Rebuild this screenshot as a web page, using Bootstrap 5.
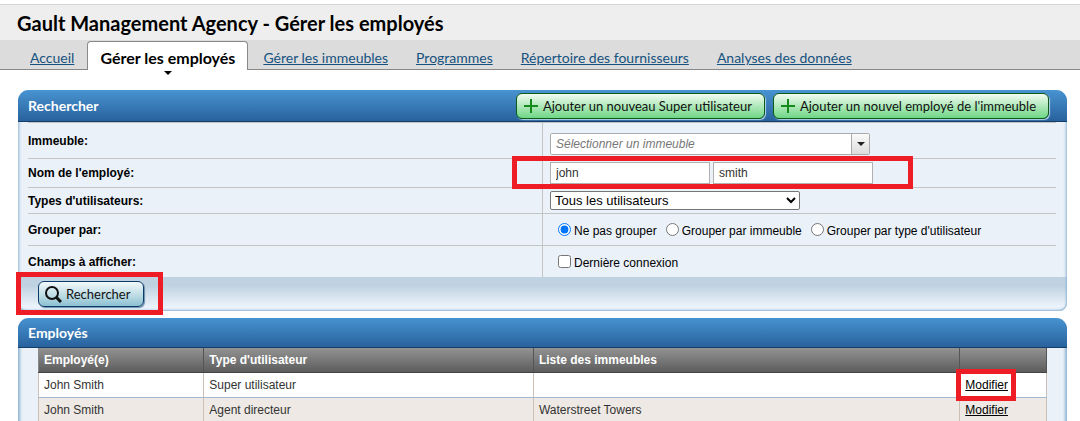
<!DOCTYPE html>
<html lang="fr">
<head>
<meta charset="utf-8">
<meta name="viewport" content="width=device-width, initial-scale=1">
<title>Gault Management Agency - Gérer les employés</title>
<link href="https://cdn.jsdelivr.net/npm/bootstrap@5.3.0/dist/css/bootstrap.min.css" rel="stylesheet">
<style>
body { font: 12px/16px "Liberation Sans", Arial, sans-serif; color: #000; background: #fff; }
.top-bar { margin-top: 4px; height: 36px; border-top: 1px solid #d5d5d5; background: #eee; padding-left: 17px; }
.top-bar h1 { font: 700 20px/36px Lato, sans-serif; color: #000; }
.tab-bar { height: 30px; background: #dcdcdc; border-bottom: 1px solid #888; padding-left: 15px; font: 14px/20px Lato, sans-serif; }
.tab-bar .nav-link { padding: 8px 15px 1px 15px; margin-right: -2px; color: #16527f; text-decoration: underline; line-height: 20px; }
.tab-bar .nav-link.active { position: relative; margin: 1px 0 0; height: 29px; padding: 6px 12px 2px; background: #fff; border: 1px solid #888; border-bottom: 0; border-radius: 4px 4px 0 0; color: #000; font-size: 16px; font-weight: 700; text-decoration: none; }
.tab-bar .nav-link.active::after { content: ""; position: absolute; left: 50%; top: 29px; margin-left: -4px; border: 4px solid transparent; border-top: 4px solid #000; border-bottom: 0; }
.panels { padding: 20px 13px 0 18px; gap: 7px; }
.panel { border-radius: 11px 11px 8px 8px; background: #eaf1f9; box-shadow: inset 0 0 3px 1px #8db4d2; }
.panel-open { border-radius: 11px 11px 0 0; box-shadow: inset 4px 0 3px -2px #8db4d2, inset -4px 0 3px -2px #8db4d2; }
.panel-head { min-height: 30px; padding: 0 18px 0 10px; border-bottom: 1px solid #153e6b; border-radius: 11px 11px 0 0; background: linear-gradient(#4893d1, #28629d); }
.panel-head h2 { font: 700 14px/29px Lato, sans-serif; color: #fff; }
.search-head { min-height: 32px; }
.push { font: 13px/20px Lato, sans-serif; height: 26px; border-radius: 6px; color: #111; padding: 2px 13px 2px 6px; gap: 4px; display: inline-flex; align-items: center; white-space: nowrap; }
.push-add { padding-right: 12px; border: 1px solid #0c5c18; background: linear-gradient(#f2fbf2, #a9e6b4 55%, #6fd787); box-shadow: 1px 1px 1px #b5d3ea; }
.push-find { border: 1px solid #0d3c6b; background: linear-gradient(#f2f9fb, #b9d9e3 60%, #8cc1d1); box-shadow: 1px 1px 1px #6b8dab; }
.fields { margin: 0 11px 0 10px; border-top: 1px solid #c4c4c4; }
.field-row + .field-row { border-top: 1px solid #c4c4c4; }
.field-name { font-weight: 700; }
.field-value { border-left: 1px solid #c4c4c4; padding-left: 7px; }
.field-choices { padding: 3px 0 0 15px; gap: 9px; }
.h-a { height: 35px; } .h-b { height: 28px; } .h-c { height: 25px; } .h-d { height: 31px; }
.combo { width: 320px; height: 22px; margin-bottom: 3px; border: 1px solid #aaa; border-radius: 2px; background: #fff; overflow: hidden; }
.combo input { border: 0; padding: 0 5px; font: italic 12px/20px "Liberation Sans", sans-serif; outline: 0; }
.combo input::placeholder { color: #777; opacity: 1; }
.combo button { width: 18px; padding: 0; border: 0; border-left: 1px solid #aaa; background: linear-gradient(#fafafa, #ddd); }
.name-pair { gap: 3px; }
.name-box { width: 160px; height: 22px; border: 1px solid #b0b0b0; padding: 1px 5px; font-size: 12px; color: #333; background: #fff; }
.type-list { width: 250px; height: 19px; border: 1px solid #767676; border-radius: 2px; font: 13px/16px "Liberation Sans", sans-serif; background: #fff; color: #000; }
.choice { gap: 3px; }
.choice input { margin: 0; width: 13px; height: 13px; }
.mark-box { position: relative; }
.mark-box::after { content: ""; position: absolute; border: 5px solid #ee1c25; pointer-events: none; }
.mark-names::after { inset: -6px -40px -5px -38px; }
.mark-find::after { inset: -10px -20px -9px -23px; }
.mark-edit::after { inset: -9px -8px -9px -9px; }
.search-foot { height: 34px; padding-left: 20px; border-radius: 0 0 8px 8px; background: linear-gradient(#bfd2e1 25%, #eaf2fa 85%); box-shadow: inset 0 -3px 2px -2px #8db4d2, inset -3px 0 2px -2px #8db4d2, inset 3px 0 2px -2px #8db4d2; }
.staff-wrap { padding: 0 20px; }
.staff { table-layout: fixed; color: #333; }
.staff th { height: 24px; padding: 0 5px; color: #fff; background: linear-gradient(#939393, #5c5c5c); border-right: 1px solid #555; border-bottom: 1px solid #444; }
.staff td { height: 25px; padding: 0 5px; background: #fff; border-right: 1px solid #cdbfb4; border-bottom: 1px solid #9fbad2; }
.staff tr:nth-child(even) td { background: #eee9e4; }
.staff td:first-child { border-left: 1px solid #cdbfb4; }
.staff th:first-child { border-left: 1px solid #888; }
.staff tr:last-child td { border-bottom: 0; }
.staff a { color: #000; }
</style>
</head>
<body>
<header>
  <div class="top-bar"><h1 class="m-0">Gault Management Agency - Gérer les employés</h1></div>
  <nav class="tab-bar nav flex-nowrap text-nowrap">
    <a class="nav-link" href="#">Accueil</a>
    <a class="nav-link active" href="#" aria-current="page">Gérer les employés</a>
    <a class="nav-link" href="#">Gérer les immeubles</a>
    <a class="nav-link" href="#">Programmes</a>
    <a class="nav-link" href="#">Répertoire des fournisseurs</a>
    <a class="nav-link" href="#">Analyses des données</a>
  </nav>
</header>
<main class="panels d-flex flex-column">
  <form class="panel">
    <div class="panel-head search-head d-flex align-items-center gap-2">
      <h2 class="m-0 me-auto">Rechercher</h2>
      <button type="button" class="push push-add">
        <svg width="16" height="16" viewBox="0 0 16 16" aria-hidden="true"><path d="M8 1v14M1 8h14" stroke="#168a1c" stroke-width="2"/></svg>Ajouter un nouveau Super utilisateur</button>
      <button type="button" class="push push-add">
        <svg width="16" height="16" viewBox="0 0 16 16" aria-hidden="true"><path d="M8 1v14M1 8h14" stroke="#168a1c" stroke-width="2"/></svg>Ajouter un nouvel employé de l'immeuble</button>
    </div>
    <div class="fields">
      <div class="field-row row g-0">
        <label class="field-name col-6 h-a d-flex align-items-center" for="immeuble">Immeuble:</label>
        <div class="field-value col-6 d-flex align-items-end">
          <div class="combo d-flex">
            <input id="immeuble" type="text" class="flex-grow-1" placeholder="Sélectionner un immeuble">
            <button type="button" aria-label="Ouvrir la liste"><svg class="d-block mx-auto" width="8" height="4" viewBox="0 0 8 4"><path d="M0 0h8L4 4z" fill="#222"/></svg></button>
          </div>
        </div>
      </div>
      <div class="field-row row g-0">
        <label class="field-name col-6 h-b d-flex align-items-center" for="prenom">Nom de l'employé:</label>
        <div class="field-value col-6 d-flex align-items-center">
          <div class="mark-box mark-names name-pair d-flex">
            <input id="prenom" class="name-box" type="text" value="john">
            <input class="name-box" type="text" value="smith" aria-label="Nom de famille">
          </div>
        </div>
      </div>
      <div class="field-row row g-0">
        <label class="field-name col-6 h-c d-flex align-items-center" for="types">Types d'utilisateurs:</label>
        <div class="field-value col-6 d-flex align-items-center">
          <select id="types" class="type-list"><option>Tous les utilisateurs</option></select>
        </div>
      </div>
      <div class="field-row row g-0" role="radiogroup" aria-labelledby="groupes">
        <div id="groupes" class="field-name col-6 h-d d-flex align-items-center">Grouper par:</div>
        <div class="field-value field-choices col-6 d-flex align-items-center text-nowrap">
          <label class="choice d-flex"><input type="radio" name="groupe" checked>Ne pas grouper</label>
          <label class="choice d-flex"><input type="radio" name="groupe">Grouper par immeuble</label>
          <label class="choice d-flex"><input type="radio" name="groupe">Grouper par type d'utilisateur</label>
        </div>
      </div>
      <div class="field-row row g-0">
        <div class="field-name col-6 h-d d-flex align-items-center">Champs à afficher:</div>
        <div class="field-value field-choices col-6 d-flex align-items-center">
          <label class="choice d-flex"><input type="checkbox">Dernière connexion</label>
        </div>
      </div>
    </div>
    <div class="search-foot d-flex align-items-center">
      <button type="submit" class="push push-find mark-box mark-find">
        <svg width="17" height="18" viewBox="0 0 17 18" aria-hidden="true"><circle cx="7" cy="8" r="6" fill="none" stroke="#111" stroke-width="2"/><path d="M11 12l5 5" stroke="#111" stroke-width="3"/></svg>Rechercher</button>
    </div>
  </form>
  <section class="panel panel-open">
    <div class="panel-head"><h2 class="m-0">Employés</h2></div>
    <div class="staff-wrap">
      <table class="staff w-100">
        <colgroup><col style="width:16.4%"><col style="width:32.7%"><col style="width:42.3%"><col style="width:8.6%"></colgroup>
        <thead><tr><th>Employé(e)</th><th>Type d'utilisateur</th><th>Liste des immeubles</th><th></th></tr></thead>
        <tbody>
          <tr><td>John Smith</td><td>Super utilisateur</td><td></td><td><a class="mark-box mark-edit" href="#">Modifier</a></td></tr>
          <tr><td>John Smith</td><td>Agent directeur</td><td>Waterstreet Towers</td><td><a href="#">Modifier</a></td></tr>
        </tbody>
      </table>
    </div>
  </section>
</main>
<script src="https://cdn.jsdelivr.net/npm/bootstrap@5.3.0/dist/js/bootstrap.bundle.min.js"></script>
</body>
</html>
